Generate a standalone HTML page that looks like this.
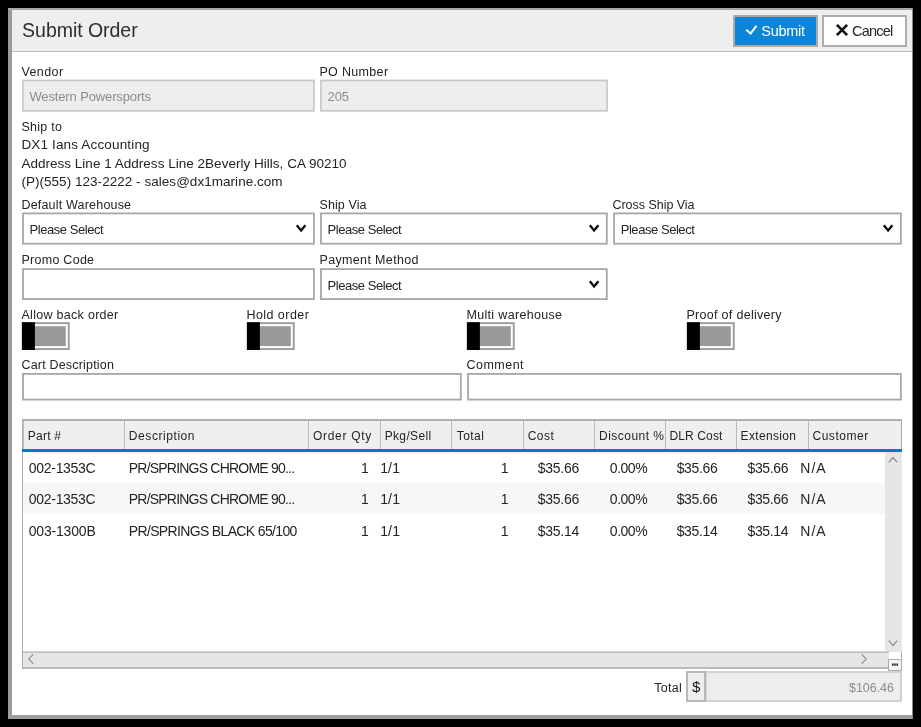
<!DOCTYPE html>
<html lang="en"><head><meta charset="utf-8"><title>Submit Order</title>
<style>
html,body{margin:0;padding:0;background:#000;}
body{width:921px;height:727px;position:relative;overflow:hidden;font-family:"Liberation Sans",sans-serif;}
#win{position:absolute;left:0;top:0;width:921px;height:727px;will-change:transform;}
.b{position:absolute;display:block;}
.t{position:absolute;white-space:pre;line-height:1;}
</style></head><body><div id="win">
<div class="b" style="left:8px;top:8px;width:905px;height:711px;background:#ffffff;"></div>
<div class="b" style="left:8px;top:8px;width:4px;height:711px;background:#9a9a9a;"></div>
<div class="b" style="left:8px;top:8px;width:905px;height:2px;background:#a6a6a6;"></div>
<div class="b" style="left:8px;top:715px;width:905px;height:4px;background:#a0a0a0;"></div>
<div class="b" style="left:912px;top:8px;width:1px;height:711px;background:#8a8a8a;"></div>
<div class="b" style="left:12px;top:10px;width:900px;height:41px;background:#eeeeee;"></div>
<div class="b" style="left:12px;top:51px;width:900px;height:1px;background:#bcbcbc;"></div>
<span class="t" style="left:22.12px;top:21px;font-size:19.5px;color:#2e2e2e;letter-spacing:-0.036px;">Submit Order</span>
<div class="b" style="left:733px;top:15px;width:85px;height:32px;background:#0c85d9;box-shadow:inset 0 0 0 2px #ada9a5;"></div>
<div class="b" style="left:822px;top:15px;width:85px;height:32px;background:#ffffff;box-shadow:inset 0 0 0 2px #adadad;"></div>
<svg class="b" style="left:745px;top:24px" width="14" height="12" viewBox="0 0 14 12"><path d="M1.3 5.7 L5.6 9.6 L11.4 1.8" fill="none" stroke="#fff" stroke-width="2"/></svg>
<span class="t" style="left:761.35px;top:24px;font-size:14.5px;color:#ffffff;letter-spacing:-0.285px;">Submit</span>
<svg class="b" style="left:835px;top:23px" width="14" height="14" viewBox="-7 -7 14 14"><path d="M-5.1 -5.1 L5.1 5.1 M5.1 -5.1 L-5.1 5.1" fill="none" stroke="#111" stroke-width="2.7"/></svg>
<span class="t" style="left:852.05px;top:24px;font-size:14.5px;color:#242424;letter-spacing:-0.786px;">Cancel</span>
<span class="t" style="left:21.44px;top:66px;font-size:12.5px;color:#242424;letter-spacing:0.401px;">Vendor</span>
<span class="t" style="left:319.44px;top:66px;font-size:12.5px;color:#242424;letter-spacing:0.329px;">PO Number</span>
<svg class="b" style="left:21px;top:78px" width="295" height="35" viewBox="0 0 295 35"><rect x="1.95" y="2.45" width="291.00" height="30.40" fill="#ededed" stroke="#c8c8c8" stroke-width="1.7"/></svg>
<svg class="b" style="left:319px;top:78px" width="290" height="35" viewBox="0 0 290 35"><rect x="1.95" y="2.45" width="286.10" height="30.40" fill="#ededed" stroke="#c8c8c8" stroke-width="1.7"/></svg>
<span class="t" style="left:29.41px;top:90px;font-size:13px;color:#8c8c8c;letter-spacing:-0.131px;">Western Powersports</span>
<span class="t" style="left:327.42px;top:90px;font-size:13px;color:#8c8c8c;letter-spacing:-0.010px;">205</span>
<span class="t" style="left:21.44px;top:121px;font-size:12.5px;color:#242424;letter-spacing:0.285px;">Ship to</span>
<span class="t" style="left:21.39px;top:138px;font-size:13.5px;color:#242424;letter-spacing:0.160px;">DX1 Ians Accounting</span>
<span class="t" style="left:21.39px;top:157px;font-size:13.5px;color:#242424;letter-spacing:0.020px;">Address Line 1 Address Line 2Beverly Hills, CA 90210</span>
<span class="t" style="left:21.39px;top:175px;font-size:13.5px;color:#242424;letter-spacing:0.037px;">(P)(555) 123-2222 - sales@dx1marine.com</span>
<span class="t" style="left:21.44px;top:199px;font-size:12.5px;color:#242424;letter-spacing:0.193px;">Default Warehouse</span>
<span class="t" style="left:319.44px;top:199px;font-size:12.5px;color:#242424;letter-spacing:0.113px;">Ship Via</span>
<span class="t" style="left:612.44px;top:199px;font-size:12.5px;color:#242424;letter-spacing:-0.025px;">Cross Ship Via</span>
<svg class="b" style="left:21px;top:211px" width="295" height="35" viewBox="0 0 295 35"><rect x="2.00" y="2.40" width="290.90" height="30.30" fill="#fff" stroke="#a6a6a6" stroke-width="1.8"/></svg>
<span class="t" style="left:29.62px;top:223px;font-size:13px;color:#242424;letter-spacing:-0.452px;">Please Select</span>
<svg class="b" style="left:293.9px;top:222.4px" width="14" height="12" viewBox="-7 -6 14 12"><path d="M-4.2 -2.8 L0.1 2.4 L4.4 -2.8" fill="none" stroke="#0a0a0a" stroke-width="2.3"/></svg>
<svg class="b" style="left:319px;top:211px" width="290" height="35" viewBox="0 0 290 35"><rect x="2.00" y="2.40" width="285.80" height="30.30" fill="#fff" stroke="#a6a6a6" stroke-width="1.8"/></svg>
<span class="t" style="left:327.62px;top:223px;font-size:13px;color:#242424;letter-spacing:-0.452px;">Please Select</span>
<svg class="b" style="left:586.8px;top:222.4px" width="14" height="12" viewBox="-7 -6 14 12"><path d="M-4.2 -2.8 L0.1 2.4 L4.4 -2.8" fill="none" stroke="#0a0a0a" stroke-width="2.3"/></svg>
<svg class="b" style="left:612px;top:211px" width="291" height="35" viewBox="0 0 291 35"><rect x="2.10" y="2.40" width="286.80" height="30.30" fill="#fff" stroke="#a6a6a6" stroke-width="1.8"/></svg>
<span class="t" style="left:620.72px;top:223px;font-size:13px;color:#242424;letter-spacing:-0.452px;">Please Select</span>
<svg class="b" style="left:880.9px;top:222.4px" width="14" height="12" viewBox="-7 -6 14 12"><path d="M-4.2 -2.8 L0.1 2.4 L4.4 -2.8" fill="none" stroke="#0a0a0a" stroke-width="2.3"/></svg>
<span class="t" style="left:21.44px;top:254px;font-size:12.5px;color:#242424;letter-spacing:0.272px;">Promo Code</span>
<span class="t" style="left:319.44px;top:254px;font-size:12.5px;color:#242424;letter-spacing:0.356px;">Payment Method</span>
<svg class="b" style="left:21px;top:267px" width="295" height="34" viewBox="0 0 295 34"><rect x="2.00" y="2.10" width="290.90" height="30.00" fill="#fff" stroke="#a6a6a6" stroke-width="1.8"/></svg>
<svg class="b" style="left:319px;top:267px" width="290" height="34" viewBox="0 0 290 34"><rect x="2.00" y="2.10" width="285.80" height="30.00" fill="#fff" stroke="#a6a6a6" stroke-width="1.8"/></svg>
<span class="t" style="left:327.62px;top:279px;font-size:13px;color:#242424;letter-spacing:-0.452px;">Please Select</span>
<svg class="b" style="left:586.8px;top:278.1px" width="14" height="12" viewBox="-7 -6 14 12"><path d="M-4.2 -2.8 L0.1 2.4 L4.4 -2.8" fill="none" stroke="#0a0a0a" stroke-width="2.3"/></svg>
<span class="t" style="left:21.44px;top:309px;font-size:12.5px;color:#242424;letter-spacing:0.295px;">Allow back order</span>
<span class="t" style="left:246.44px;top:309px;font-size:12.5px;color:#242424;letter-spacing:0.451px;">Hold order</span>
<span class="t" style="left:466.44px;top:309px;font-size:12.5px;color:#242424;letter-spacing:0.329px;">Multi warehouse</span>
<span class="t" style="left:686.44px;top:309px;font-size:12.5px;color:#242424;letter-spacing:0.300px;">Proof of delivery</span>
<svg class="b" style="left:20px;top:321px" width="51" height="30" viewBox="0 0 51 30"><rect x="2.85" y="2.15" width="45.90" height="25.90" fill="#fff" stroke="#9c9c9c" stroke-width="1.9"/></svg>
<svg class="b" style="left:25px;top:325px" width="42" height="23" viewBox="0 0 42 23"><rect x="1.00" y="1.20" width="39.80" height="19.90" fill="#999999" stroke="none" stroke-width="0"/></svg>
<svg class="b" style="left:20px;top:321px" width="16" height="30" viewBox="0 0 16 30"><rect x="1.90" y="1.20" width="13.00" height="27.80" fill="#000" stroke="none" stroke-width="0"/></svg>
<svg class="b" style="left:245px;top:321px" width="51" height="30" viewBox="0 0 51 30"><rect x="2.85" y="2.15" width="45.90" height="25.90" fill="#fff" stroke="#9c9c9c" stroke-width="1.9"/></svg>
<svg class="b" style="left:250px;top:325px" width="42" height="23" viewBox="0 0 42 23"><rect x="1.00" y="1.20" width="39.80" height="19.90" fill="#999999" stroke="none" stroke-width="0"/></svg>
<svg class="b" style="left:245px;top:321px" width="16" height="30" viewBox="0 0 16 30"><rect x="1.90" y="1.20" width="13.00" height="27.80" fill="#000" stroke="none" stroke-width="0"/></svg>
<svg class="b" style="left:465px;top:321px" width="51" height="30" viewBox="0 0 51 30"><rect x="2.85" y="2.15" width="45.90" height="25.90" fill="#fff" stroke="#9c9c9c" stroke-width="1.9"/></svg>
<svg class="b" style="left:470px;top:325px" width="42" height="23" viewBox="0 0 42 23"><rect x="1.00" y="1.20" width="39.80" height="19.90" fill="#999999" stroke="none" stroke-width="0"/></svg>
<svg class="b" style="left:465px;top:321px" width="16" height="30" viewBox="0 0 16 30"><rect x="1.90" y="1.20" width="13.00" height="27.80" fill="#000" stroke="none" stroke-width="0"/></svg>
<svg class="b" style="left:685px;top:321px" width="51" height="30" viewBox="0 0 51 30"><rect x="2.85" y="2.15" width="45.90" height="25.90" fill="#fff" stroke="#9c9c9c" stroke-width="1.9"/></svg>
<svg class="b" style="left:690px;top:325px" width="42" height="23" viewBox="0 0 42 23"><rect x="1.00" y="1.20" width="39.80" height="19.90" fill="#999999" stroke="none" stroke-width="0"/></svg>
<svg class="b" style="left:685px;top:321px" width="16" height="30" viewBox="0 0 16 30"><rect x="1.90" y="1.20" width="13.00" height="27.80" fill="#000" stroke="none" stroke-width="0"/></svg>
<span class="t" style="left:21.44px;top:359px;font-size:12.5px;color:#242424;letter-spacing:0.187px;">Cart Description</span>
<span class="t" style="left:466.44px;top:359px;font-size:12.5px;color:#242424;letter-spacing:0.490px;">Comment</span>
<svg class="b" style="left:21px;top:372px" width="442" height="30" viewBox="0 0 442 30"><rect x="2.00" y="1.90" width="437.80" height="25.70" fill="#fff" stroke="#a6a6a6" stroke-width="1.8"/></svg>
<svg class="b" style="left:466px;top:372px" width="437" height="30" viewBox="0 0 437 30"><rect x="2.10" y="1.90" width="432.80" height="25.70" fill="#fff" stroke="#a6a6a6" stroke-width="1.8"/></svg>
<div class="b" style="left:22px;top:419px;width:880px;height:250px;background:#fff;box-shadow:inset 0 0 0 1px #adadad;"></div>
<div class="b" style="left:22px;top:419px;width:880px;height:2px;background:#b0b0b0;"></div>
<div class="b" style="left:23px;top:421px;width:878px;height:28px;background:#efefef;"></div>
<div class="b" style="left:23px;top:421px;width:1px;height:28px;background:#c0c0c0;"></div>
<div class="b" style="left:22px;top:449px;width:880px;height:3px;background:#0f76bd;"></div>
<div class="b" style="left:124px;top:421px;width:1px;height:28px;background:#b9b9b9;"></div>
<div class="b" style="left:308px;top:421px;width:1px;height:28px;background:#b9b9b9;"></div>
<div class="b" style="left:380px;top:421px;width:1px;height:28px;background:#b9b9b9;"></div>
<div class="b" style="left:451px;top:421px;width:1px;height:28px;background:#b9b9b9;"></div>
<div class="b" style="left:523px;top:421px;width:1px;height:28px;background:#b9b9b9;"></div>
<div class="b" style="left:594px;top:421px;width:1px;height:28px;background:#b9b9b9;"></div>
<div class="b" style="left:665px;top:421px;width:1px;height:28px;background:#b9b9b9;"></div>
<div class="b" style="left:736px;top:421px;width:1px;height:28px;background:#b9b9b9;"></div>
<div class="b" style="left:808px;top:421px;width:1px;height:28px;background:#b9b9b9;"></div>
<span class="t" style="left:27.66px;top:430px;font-size:12px;color:#242424;letter-spacing:0.273px;">Part #</span>
<span class="t" style="left:128.86px;top:430px;font-size:12px;color:#242424;letter-spacing:0.565px;">Description</span>
<span class="t" style="left:312.96px;top:430px;font-size:12px;color:#242424;letter-spacing:0.700px;">Order Qty</span>
<span class="t" style="left:384.66px;top:430px;font-size:12px;color:#242424;letter-spacing:0.351px;">Pkg/Sell</span>
<span class="t" style="left:456.76px;top:430px;font-size:12px;color:#242424;letter-spacing:0.433px;">Total</span>
<span class="t" style="left:527.66px;top:430px;font-size:12px;color:#242424;letter-spacing:0.468px;">Cost</span>
<span class="t" style="left:599.06px;top:430px;font-size:12px;color:#242424;letter-spacing:0.465px;">Discount %</span>
<span class="t" style="left:669.46px;top:430px;font-size:12px;color:#242424;letter-spacing:0.124px;">DLR Cost</span>
<span class="t" style="left:740.56px;top:430px;font-size:12px;color:#242424;letter-spacing:0.347px;">Extension</span>
<span class="t" style="left:812.46px;top:430px;font-size:12px;color:#242424;letter-spacing:0.538px;">Customer</span>
<div class="b" style="left:23px;top:483px;width:862px;height:31px;background:#f7f7f7;"></div>
<span class="t" style="left:28.77px;top:461px;font-size:14px;color:#242424;letter-spacing:-0.290px;">002-1353C</span>
<span class="t" style="left:128.77px;top:461px;font-size:14px;color:#242424;letter-spacing:-0.788px;">PR/SPRINGS CHROME 90...</span>
<span class="t" style="left:361.01px;top:461px;font-size:14px;color:#242424;">1</span>
<span class="t" style="left:380.17px;top:461px;font-size:14px;color:#242424;letter-spacing:0.149px;">1/1</span>
<span class="t" style="left:500.71px;top:461px;font-size:14px;color:#242424;">1</span>
<span class="t" style="left:537.67px;top:461px;font-size:14px;color:#242424;letter-spacing:-0.232px;">$35.66</span>
<span class="t" style="left:609.87px;top:461px;font-size:14px;color:#242424;letter-spacing:-0.484px;">0.00%</span>
<span class="t" style="left:676.67px;top:461px;font-size:14px;color:#242424;letter-spacing:-0.352px;">$35.66</span>
<span class="t" style="left:747.47px;top:461px;font-size:14px;color:#242424;letter-spacing:-0.372px;">$35.66</span>
<span class="t" style="left:800.37px;top:461px;font-size:14px;color:#242424;letter-spacing:0.961px;">N/A</span>
<span class="t" style="left:28.77px;top:492px;font-size:14px;color:#242424;letter-spacing:-0.290px;">002-1353C</span>
<span class="t" style="left:128.77px;top:492px;font-size:14px;color:#242424;letter-spacing:-0.788px;">PR/SPRINGS CHROME 90...</span>
<span class="t" style="left:361.01px;top:492px;font-size:14px;color:#242424;">1</span>
<span class="t" style="left:380.17px;top:492px;font-size:14px;color:#242424;letter-spacing:0.149px;">1/1</span>
<span class="t" style="left:500.71px;top:492px;font-size:14px;color:#242424;">1</span>
<span class="t" style="left:537.67px;top:492px;font-size:14px;color:#242424;letter-spacing:-0.232px;">$35.66</span>
<span class="t" style="left:609.87px;top:492px;font-size:14px;color:#242424;letter-spacing:-0.484px;">0.00%</span>
<span class="t" style="left:676.67px;top:492px;font-size:14px;color:#242424;letter-spacing:-0.352px;">$35.66</span>
<span class="t" style="left:747.47px;top:492px;font-size:14px;color:#242424;letter-spacing:-0.372px;">$35.66</span>
<span class="t" style="left:800.37px;top:492px;font-size:14px;color:#242424;letter-spacing:0.961px;">N/A</span>
<span class="t" style="left:28.77px;top:524px;font-size:14px;color:#242424;letter-spacing:-0.193px;">003-1300B</span>
<span class="t" style="left:128.77px;top:524px;font-size:14px;color:#242424;letter-spacing:-0.650px;">PR/SPRINGS BLACK 65/100</span>
<span class="t" style="left:361.01px;top:524px;font-size:14px;color:#242424;">1</span>
<span class="t" style="left:380.17px;top:524px;font-size:14px;color:#242424;letter-spacing:0.149px;">1/1</span>
<span class="t" style="left:500.71px;top:524px;font-size:14px;color:#242424;">1</span>
<span class="t" style="left:537.67px;top:524px;font-size:14px;color:#242424;letter-spacing:-0.232px;">$35.14</span>
<span class="t" style="left:609.87px;top:524px;font-size:14px;color:#242424;letter-spacing:-0.484px;">0.00%</span>
<span class="t" style="left:676.67px;top:524px;font-size:14px;color:#242424;letter-spacing:-0.352px;">$35.14</span>
<span class="t" style="left:747.47px;top:524px;font-size:14px;color:#242424;letter-spacing:-0.372px;">$35.14</span>
<span class="t" style="left:800.37px;top:524px;font-size:14px;color:#242424;letter-spacing:0.961px;">N/A</span>
<div class="b" style="left:885px;top:452px;width:17px;height:200px;background:#e6e6e6;"></div>
<div class="b" style="left:23px;top:651px;width:866px;height:18px;background:#e6e6e6;"></div>
<div class="b" style="left:23px;top:651px;width:866px;height:1px;background:#d6d6d6;"></div>
<div class="b" style="left:23px;top:652px;width:866px;height:1px;background:#bebebe;"></div>
<div class="b" style="left:23px;top:667px;width:866px;height:2px;background:#bababa;"></div>
<svg class="b" style="left:885px;top:452.3px" width="16" height="16" viewBox="-8 -8 16 16"><path d="M-4.3 2.4 L0 -2.4 L4.3 2.4" fill="none" stroke="#858585" stroke-width="1.05"/></svg>
<svg class="b" style="left:885px;top:635px" width="16" height="16" viewBox="-8 -8 16 16"><path d="M-4.3 -2.4 L0 2.4 L4.3 -2.4" fill="none" stroke="#858585" stroke-width="1.05"/></svg>
<svg class="b" style="left:22.7px;top:651.2px" width="16" height="16" viewBox="-8 -8 16 16"><path d="M2.2 -4.6 L-2.2 0 L2.2 4.6" fill="none" stroke="#858585" stroke-width="1.05"/></svg>
<svg class="b" style="left:855.5px;top:651.2px" width="16" height="16" viewBox="-8 -8 16 16"><path d="M-2.2 -4.6 L2.2 0 L-2.2 4.6" fill="none" stroke="#858585" stroke-width="1.05"/></svg>
<div class="b" style="left:889px;top:653px;width:12px;height:7px;background:#fff;"></div>
<div class="b" style="left:888px;top:659px;width:14px;height:12px;background:#f3f3f3;box-shadow:inset 0 0 0 1px #adadad;"></div>
<svg class="b" style="left:889px;top:661px" width="12" height="8" viewBox="0 0 12 8"><rect x="3" y="2.5" width="1.6" height="2.2" fill="#222"/><rect x="5.2" y="2.5" width="1.6" height="2.2" fill="#222"/><rect x="7.4" y="2.5" width="1.6" height="2.2" fill="#222"/></svg>
<span class="t" style="left:654.14px;top:682px;font-size:12.5px;color:#242424;letter-spacing:0.305px;">Total</span>
<div class="b" style="left:705px;top:671px;width:197px;height:31px;background:#ededed;box-shadow:inset 0 0 0 2px #d2d2d2;"></div>
<div class="b" style="left:686px;top:671px;width:20px;height:31px;background:#eeeeee;box-shadow:inset 0 0 0 2px #b8b8b8;"></div>
<span class="t" style="left:692.25px;top:680px;font-size:14.5px;color:#111;">$</span>
<span class="t" style="left:849.04px;top:682px;font-size:12.5px;color:#8c8c8c;letter-spacing:-0.044px;">$106.46</span>
</div></body></html>
